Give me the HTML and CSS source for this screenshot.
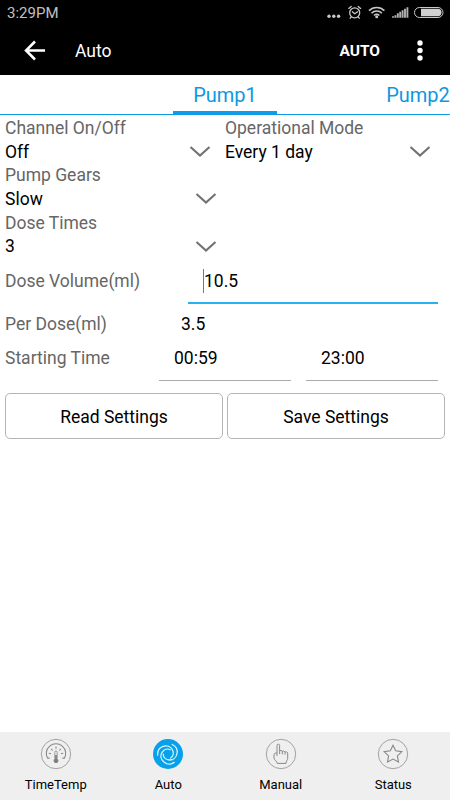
FILE: index.html
```html
<!DOCTYPE html>
<html lang="en">
<head>
    <meta charset="UTF-8">
    <meta name="viewport" content="width=device-width, initial-scale=1.0">
    <title>Auto</title>
    <link rel="stylesheet" href="styles.css">
</head>
<body>

    <div class="status-bar">
        <span class="clock">3:29PM</span>
        <svg width="130" height="26" viewBox="0 0 130 26">
            <g fill="#c8c8c8">
                <circle cx="9" cy="16.2" r="1.7"/>
                <circle cx="13.8" cy="16.2" r="1.7"/>
                <circle cx="18.6" cy="16.2" r="1.7"/>
            </g>
            <g fill="none" stroke="#c8c8c8" stroke-width="1.3" stroke-linecap="round">
                <circle cx="34.7" cy="12.8" r="5"/>
                <path d="M28.8 8.4l2.4-2M40.6 8.4l-2.4-2M31.2 17l-1 1.2M38.2 17l1 1.2M32.3 11.8l2.4 2 2.9-2"/>
            </g>
            <g fill="none" stroke="#c8c8c8" stroke-width="1.6">
                <path d="M49 10.6a11 11 0 0 1 15.4 0M51.5 13.2a7.4 7.4 0 0 1 10.4 0M54 15.5a4 4 0 0 1 5.4 0"/>
                <circle cx="56.7" cy="16.7" r=".7" fill="#c8c8c8"/>
            </g>
            <path d="M73 17.8v-1.5M75.4 17.8v-2.5M77.8 17.8v-4.5M80.2 17.8v-6M82.6 17.8v-7.5M85 17.8v-9M87.4 17.8v-10.5" stroke="#b0b0b0" stroke-width="1.9"/>
            <rect x="94.5" y="7.5" width="28.5" height="10" rx="5" fill="none" stroke="#c8c8c8"/>
            <path d="M101 8.8h16.8a3.7 3.7 0 0 1 0 7.4h-16.800z" fill="#d0d0d0"/>
        </svg>
    </div>

    <header class="app-bar">
        <svg width="22" height="22" viewBox="0 0 22 22">
            <path d="M11 1.5L2 10.5l9 9M2 10.5h19" fill="none" stroke="#fff" stroke-width="2.5"/>
        </svg>
        <h1 class="title">Auto</h1>
        <span class="action">AUTO</span>
        <svg width="8" height="22" viewBox="0 0 8 22">
            <g fill="#fff">
                <circle cx="4" cy="3" r="2.7"/>
                <circle cx="4" cy="10.5" r="2.7"/>
                <circle cx="4" cy="18" r="2.7"/>
            </g>
        </svg>
    </header>

    <nav class="tabs">
        <span class="tab active">Pump1</span>
        <span class="tab">Pump2</span>
    </nav>

    <main class="settings">
        <div class="row">
            <div class="field">
                <div class="label">Channel On/Off</div>
                <div class="select">Off
                    <svg class="chevron" width="22" height="13" viewBox="0 0 22 13"><path d="M1.5 2L11 10.5 20.5 2"/></svg>
                </div>
            </div>
            <div class="field">
                <div class="label">Operational Mode</div>
                <div class="select">Every 1 day
                    <svg class="chevron" width="22" height="13" viewBox="0 0 22 13"><path d="M1.5 2L11 10.5 20.5 2"/></svg>
                </div>
            </div>
        </div>
        <div class="field single">
            <div class="label">Pump Gears</div>
            <div class="select">Slow
                <svg class="chevron" width="22" height="13" viewBox="0 0 22 13"><path d="M1.5 2L11 10.5 20.5 2"/></svg>
            </div>
        </div>
        <div class="field single">
            <div class="label">Dose Times</div>
            <div class="select">3
                <svg class="chevron" width="22" height="13" viewBox="0 0 22 13"><path d="M1.5 2L11 10.5 20.5 2"/></svg>
            </div>
        </div>

        <div class="line volume">
            <span class="label">Dose Volume(ml)</span>
            <div class="input focused"><span class="caret"></span>10.5</div>
        </div>
        <div class="line per-dose">
            <span class="label">Per Dose(ml)</span>
            <span class="value">3.5</span>
        </div>
        <div class="line times">
            <span class="label">Starting Time</span>
            <div class="input">00:59</div>
            <div class="input">23:00</div>
        </div>

        <div class="buttons">
            <button>Read Settings</button>
            <button>Save Settings</button>
        </div>
    </main>

    <nav class="bottom-nav">
        <div class="item">
            <svg width="32" height="32" viewBox="0 0 32 32" fill="none" stroke="#888">
                <circle cx="16" cy="16" r="14.7" stroke="#999" stroke-width=".9"/>
                <path d="M7.7 20.5a9.7 9.7 0 1 1 16.6 0" stroke-width="1.1"/>
                <path d="M7.7 20.5l2-.8M24.3 20.5l-2-.8M8.8 15.2l2.2.5M11.2 10.8l1.4 1.7M16 8.5v2.3M20.8 10.8l-1.4 1.7M23.2 15.2l-2.2.5" stroke-width="1.1"/>
                <path d="M14.8 20.5v-6.3a1.2 1.2 0 0 1 2.4 0v6.3" stroke-width=".8"/>
                <path d="M16 17v5" stroke="#666" stroke-width="1.4"/>
                <circle cx="16" cy="22.7" r="2" fill="#777"/>
            </svg>
            <span>TimeTemp</span>
        </div>
        <div class="item">
            <svg width="32" height="32" viewBox="0 0 32 32" fill="none" stroke="#d9f2fd" stroke-width="1.3" stroke-linecap="round">
                <circle cx="16" cy="16" r="15" fill="#06a1ea" stroke="none"/>
                <path id="arm" d="M20.2 6.5C23.5 8 25.7 11.5 25 15.5C24.3 19.5 21.3 22.2 17.5 22C14 21.8 11.3 19.5 11.2 16.2"/>
                <use href="#arm" transform="rotate(120 16 16)"/>
                <use href="#arm" transform="rotate(240 16 16)"/>
            </svg>
            <span>Auto</span>
        </div>
        <div class="item">
            <svg width="32" height="32" viewBox="0 0 32 32" fill="none" stroke="#888">
                <circle cx="16" cy="16" r="14.7" stroke="#999" stroke-width=".9"/>
                <path d="M12 18V7.5a1.3 1.3 0 0 1 2.6 0v6c0-1.4 2.7-1.4 2.7 0v.5c0-1.3 2.7-1.3 2.7.2v.5c0-1.3 2.7-1.1 2.7.4v5.4c0 1.6-1.7 2.4-1.7 4.9h-8.7c0-2-3.3-3.2-3.3-5.5v-3.2c0-1.5 1.400-1.700 3-1.700M14.600 13.500v2.500M17.300 14v2.300M20 15v1.700"/>
            </svg>
            <span>Manual</span>
        </div>
        <div class="item">
            <svg width="32" height="32" viewBox="0 0 32 32" fill="none" stroke="#888">
                <circle cx="16" cy="16" r="14.7" stroke="#999" stroke-width=".9"/>
                <path d="M16 7.2l2.7 5.6 6.2.8-4.5 4.3 1.1 6.1-5.5-2.9-5.5 2.9 1.1-6.1-4.5-4.3 6.2-.8z" stroke-width="1.1"/>
            </svg>
            <span>Status</span>
        </div>
    </nav>

</body>
</html>
```

FILE: styles.css
```css
* {
    box-sizing: border-box;
}

body {
    margin: 0;
    height: 100vh;
    display: flex;
    flex-direction: column;
    overflow: hidden;
    background-color: #fff;
    font-family: Roboto, sans-serif;
    font-size: 17.5px;
    color: #000;
}

svg {
    display: block;
    flex: none;
}

.status-bar {
    display: flex;
    justify-content: space-between;
    height: 26px;
    padding-left: 7px;
    background-color: #000;
    color: #c0c0c0;
}

.clock {
    font-size: 15px;
    line-height: 27px;
}

.app-bar {
    display: flex;
    align-items: center;
    height: 49px;
    padding: 0 26px 0 24px;
    background-color: #000;
    color: #fff;
}

.title {
    flex: 1;
    margin: 0 0 0 29px;
    font-size: 17.5px;
    font-weight: 400;
}

.action {
    margin-right: 36px;
    font-size: 15.5px;
    font-weight: 700;
}

.tabs {
    display: flex;
    gap: 89px;
    height: 40px;
    padding-left: 173px;
    border-bottom: 1px solid #0d98e3;
    overflow: hidden;
}

.tab {
    flex: none;
    width: 104px;
    height: 39px;
    font-size: 20px;
    line-height: 40px;
    text-align: center;
    color: #0d98e3;
}

.tab.active {
    border-bottom: 3px solid #0d9de9;
}

.settings {
    flex: 1;
    padding: 2px 5px 0;
}

.row {
    display: grid;
    grid-template-columns: 1fr 1fr;
}

.label {
    color: #666;
}

.field .label,
.select {
    height: 23.7px;
    line-height: 23.7px;
}

.select {
    display: flex;
    align-items: center;
    justify-content: space-between;
    padding-right: 14px;
}

.single {
    width: 226px;
}

.chevron {
    margin-bottom: 2px;
}

.chevron path {
    fill: none;
    stroke: #737373;
    stroke-width: 2.2;
}

.line {
    display: flex;
}

.line .label {
    flex: none;
}

.input {
    flex: none;
    border-bottom: 1px solid #aaa;
}

.volume {
    height: 45px;
    line-height: 45px;
}

.volume .label {
    width: 183px;
}

.focused {
    display: flex;
    align-items: center;
    width: 250px;
    padding: 1px 0 0 15px;
    border-bottom: 2px solid #28b1f0;
}

.caret {
    width: 1px;
    height: 24px;
    background-color: #777;
}

.per-dose {
    height: 41px;
    line-height: 41px;
}

.per-dose .label {
    width: 176px;
}

.times {
    height: 36px;
    line-height: 27px;
}

.times .label {
    width: 154px;
}

.times .input {
    width: 132px;
    padding-left: 15px;
}

.times .input + .input {
    margin-left: 15px;
}

.buttons {
    display: grid;
    grid-template-columns: 1fr 1fr;
    gap: 4px;
    margin-top: 12px;
}

button {
    height: 46px;
    padding: 2px 0 0;
    border: 1px solid #b5b5b5;
    border-radius: 5px;
    background-color: #fff;
    color: #000;
    font: inherit;
}

.bottom-nav {
    display: grid;
    grid-template-columns: repeat(4, 1fr);
    height: 68px;
    background-color: #efefef;
    font-size: 13px;
}

.item {
    display: flex;
    flex-direction: column;
    align-items: center;
    gap: 7px;
    padding: 6px 1px 0 0;
}
```
